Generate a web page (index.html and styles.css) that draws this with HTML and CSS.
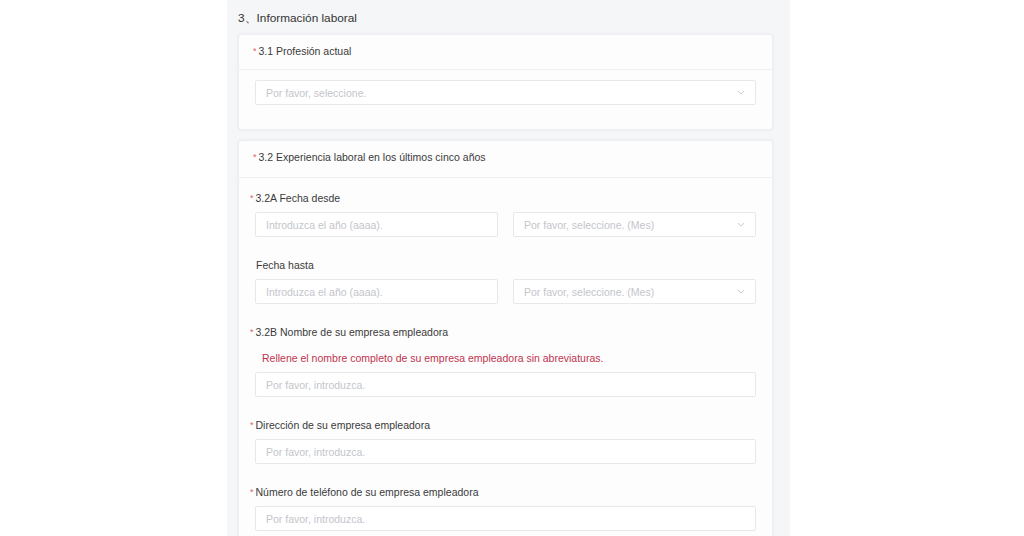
FILE: index.html
```html
<!DOCTYPE html>
<html lang="es">
<head>
<meta charset="utf-8">
<title>Información laboral</title>
<link rel="stylesheet" href="styles.css">
</head>
<body>
<div class="page">
  <h2 class="section-title">3、Información laboral</h2>

  <section class="card">
    <div class="card-head"><span class="req">*</span>3.1 Profesión actual</div>
    <div class="card-body card-body-short">
      <div class="select"><span class="ph">Por favor, seleccione.</span><svg class="chev" viewBox="0 0 10 6"><path d="M1 1l4 4 4-4"/></svg></div>
    </div>
  </section>

  <section class="card card-2">
    <div class="card-head"><span class="req">*</span>3.2 Experiencia laboral en los últimos cinco años</div>
    <div class="card-body">
      <div class="field">
        <div class="label"><span class="req">*</span>3.2A Fecha desde</div>
        <div class="row">
          <div class="input"><span class="ph">Introduzca el año (aaaa).</span></div>
          <div class="select"><span class="ph">Por favor, seleccione. (Mes)</span><svg class="chev" viewBox="0 0 10 6"><path d="M1 1l4 4 4-4"/></svg></div>
        </div>
      </div>
      <div class="field">
        <div class="label">Fecha hasta</div>
        <div class="row">
          <div class="input"><span class="ph">Introduzca el año (aaaa).</span></div>
          <div class="select"><span class="ph">Por favor, seleccione. (Mes)</span><svg class="chev" viewBox="0 0 10 6"><path d="M1 1l4 4 4-4"/></svg></div>
        </div>
      </div>
      <div class="field">
        <div class="label"><span class="req">*</span>3.2B Nombre de su empresa empleadora</div>
        <div class="hint">Rellene el nombre completo de su empresa empleadora sin abreviaturas.</div>
        <div class="input"><span class="ph">Por favor, introduzca.</span></div>
      </div>
      <div class="field">
        <div class="label"><span class="req">*</span>Dirección de su empresa empleadora</div>
        <div class="input"><span class="ph">Por favor, introduzca.</span></div>
      </div>
      <div class="field">
        <div class="label"><span class="req">*</span>Número de teléfono de su empresa empleadora</div>
        <div class="input"><span class="ph">Por favor, introduzca.</span></div>
      </div>
    </div>
  </section>
</div>
</body>
</html>
```

FILE: styles.css
```css
html, body {
  margin: 0;
  padding: 0;
  background: #ffffff;
  height: 536px;
  overflow: hidden;
}

body {
  font-family: "Liberation Sans", Arial, sans-serif;
  color: #3a3a3a;
}

.page {
  width: 552px;
  margin-left: 227px;
  padding: 0 0 0 11px;
  background: #f5f6f8;
  height: 536px;
  box-sizing: content-box;
}

.section-title {
  margin: 0;
  padding-top: 10px;
  height: 24px;
  font-size: 11.8px;
  font-weight: normal;
  color: #333;
  line-height: 16px;
}

.card {
  width: 535px;
  background: #fdfdfd;
  border-radius: 3px;
  box-shadow: 0 0 3px rgba(0, 0, 0, 0.06);
  border: 1px solid #eceef2;
  box-sizing: border-box;
}

.card-2 {
  margin-top: 10px;
}

.card-head {
  height: 35px;
  box-sizing: border-box;
  padding: 8px 0 0 20px;
  font-size: 10.5px;
  line-height: 16px;
  color: #3a3a3a;
  border-bottom: 1px solid #eff0f3;
}

.card-2 .card-head {
  height: 37px;
  padding-top: 8px;
}

.req {
  color: #e25b6a;
  font-size: 9px;
  margin-left: -6px;
  margin-right: 2px;
  vertical-align: 1px;
}

.card-body {
  padding: 10px 16px 0 16px;
}

.card-body-short {
  padding-bottom: 24px;
}

.card-2 .card-body {
  padding-top: 12px;
}

.field {
  margin-bottom: 20px;
}

.label {
  font-size: 10.5px;
  line-height: 16px;
  padding-left: 1px;
  margin-bottom: 6px;
  color: #3a3a3a;
}

.hint {
  font-size: 10.5px;
  line-height: 16px;
  color: #bd344f;
  padding-left: 7px;
  margin-top: 10px;
  margin-bottom: 6px;
}

.row {
  display: flex;
  gap: 15px;
}

.row > * {
  flex: 1;
}

.input, .select {
  height: 25px;
  box-sizing: border-box;
  border: 1px solid #e6e8ec;
  border-radius: 2px;
  background: #ffffff;
  display: flex;
  align-items: center;
  padding: 0 10px;
}

.ph {
  font-size: 10.5px;
  color: #c3c5cb;
  flex: 1;
  white-space: nowrap;
}

.chev {
  width: 8px;
  height: 5px;
  fill: none;
  stroke: #c6c8cd;
  stroke-width: 1.2;
}
```
